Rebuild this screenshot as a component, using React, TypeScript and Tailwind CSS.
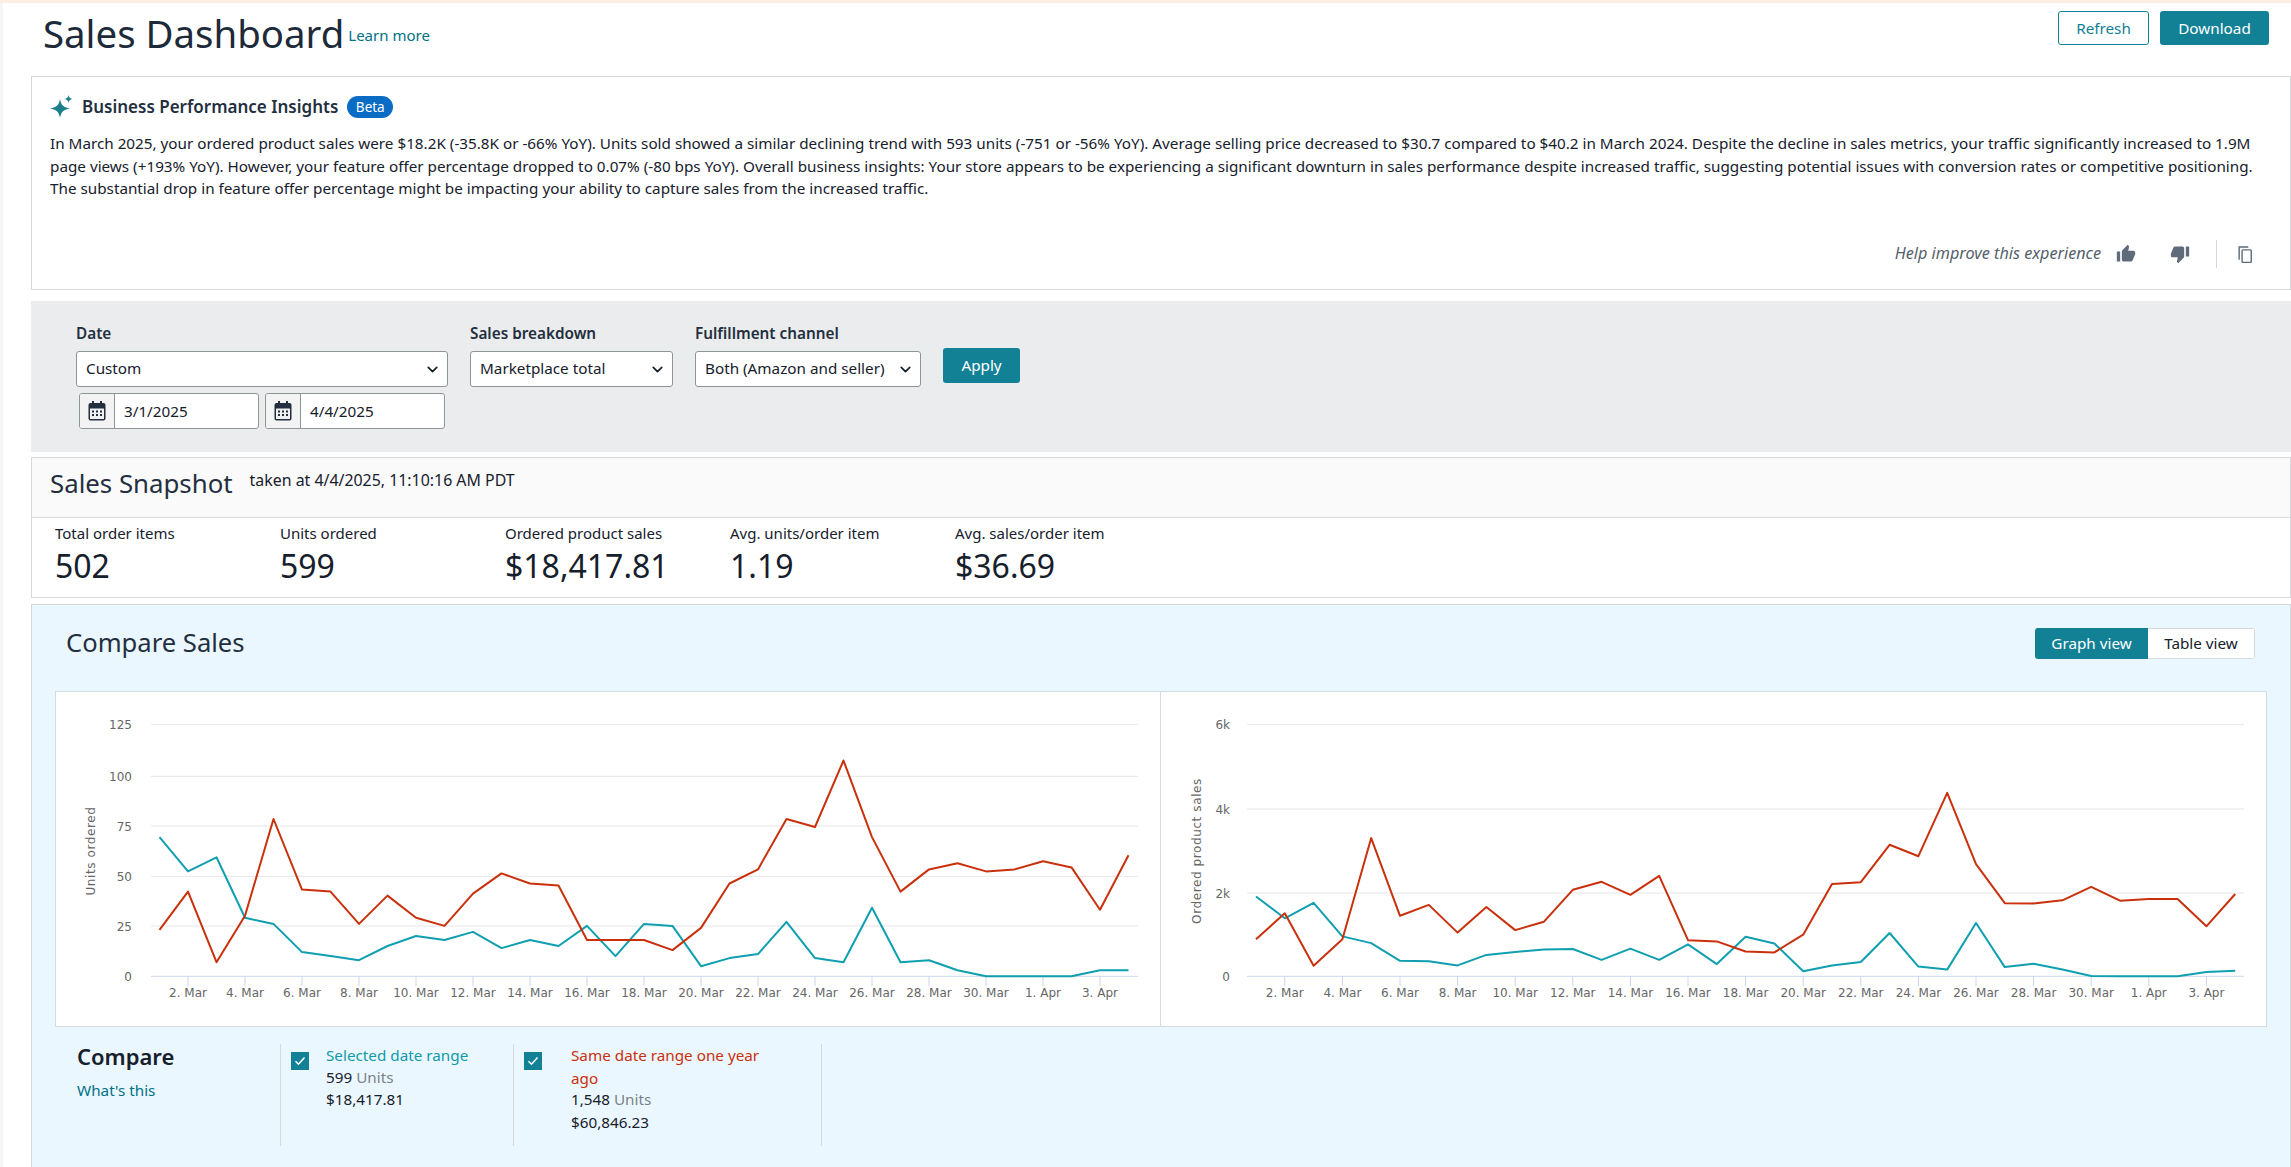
import React from "react";
import { ChevronDown } from "lucide-react";

const unitsRed = [23,42,7,30,78,43,42,26,40,29,25,41,51,46,45,18,18,18,13,24,46,53,78,74,107,69,42,53,56,52,53,57,54,33,60];
const unitsTeal = [69,52,59,29,26,12,10,8,15,20,18,22,14,18,15,25,10,26,25,5,9,11,27,9,7,34,7,8,3,0,0,0,0,3,3];
const salesRed = [880,1500,250,880,3290,1440,1700,1040,1650,1100,1300,2060,2250,1940,2390,860,830,590,570,990,2200,2240,3130,2860,4370,2670,1740,1730,1810,2130,1800,1840,1840,1190,1960];
const salesTeal = [1900,1380,1750,950,790,370,360,260,510,580,640,650,390,660,390,760,290,940,780,120,260,340,1030,230,160,1270,220,300,160,10,0,0,0,100,130];
const ticks = ["2. Mar","4. Mar","6. Mar","8. Mar","10. Mar","12. Mar","14. Mar","16. Mar","18. Mar","20. Mar","22. Mar","24. Mar","26. Mar","28. Mar","30. Mar","1. Apr","3. Apr"];

type ChartProps = {
  viewX: number; width: number; x0: number; step: number; gridL: number; gridR: number;
  labelX: number; titleX: number; title: string; yLabels: [string, number][];
  scale: number; red: number[]; teal: number[];
};

function Chart({ viewX, width, x0, step, gridL, gridR, labelX, titleX, title, yLabels, scale, red, teal }: ChartProps) {
  const base = 975.3;
  const pts = (d: number[]) => d.map((v, i) => `${(x0 + i * step).toFixed(1)},${(base - v * scale).toFixed(1)}`).join(" ");
  return (
    <svg width={width} height={334} viewBox={`${viewX} 691 ${width} 334`} className="block shrink-0">
      {yLabels.map(([t, y]) => (
        <g key={t}>
          <line x1={gridL} x2={gridR} y1={y} y2={y} stroke={t === "0" ? "#ccd6eb" : "#e6e6e6"} strokeWidth={1} />
          <text x={labelX} y={y + 5} textAnchor="end" fontSize={12} fill="#666666" fontFamily="'DejaVu Sans', sans-serif">{t}</text>
        </g>
      ))}
      {ticks.map((t, i) => {
        const x = x0 + (1 + i * 2) * step;
        return (
          <g key={t}>
            <line x1={x} x2={x} y1={975} y2={985} stroke="#ccd6eb" />
            <text x={x} y={996} textAnchor="middle" fontSize={12} fill="#666666" fontFamily="'DejaVu Sans', sans-serif">{t}</text>
          </g>
        );
      })}
      <text transform={`translate(${titleX} 850) rotate(-90)`} textAnchor="middle" fontSize={12} letterSpacing={0.6} fill="#666666" fontFamily="'DejaVu Sans', sans-serif">{title}</text>
      <polyline points={pts(teal)} fill="none" stroke="#0f9fb0" strokeWidth={2} strokeLinejoin="round" />
      <polyline points={pts(red)} fill="none" stroke="#c9300c" strokeWidth={2} strokeLinejoin="round" />
    </svg>
  );
}

function Select({ label, width, value }: { label: string; width: string; value: string }) {
  return (
    <div className={`flex h-[36px] items-center justify-between rounded-[3px] border border-[#8d9596] bg-white pl-[9px] pr-[6px] text-[15.25px] text-[#16202c] ${width}`}>
      <span className="mt-[-2px] whitespace-nowrap">{value}</span>
      <ChevronDown size={17} strokeWidth={2.4} className="shrink-0 text-[#16202c]" aria-label={label} />
    </div>
  );
}

function Cal() {
  return (
    <svg width="18" height="20" viewBox="0 0 18 20" aria-hidden="true">
      <rect x="4" y="0" width="2" height="4" fill="#232f3e" />
      <rect x="12" y="0" width="2" height="4" fill="#232f3e" />
      <rect x="0.5" y="2" width="17" height="17.5" rx="2" fill="#232f3e" />
      <rect x="2" y="7.5" width="14" height="10.5" rx="0.5" fill="#eef0f1" />
      {[4, 8, 12].map((x) => [9.5, 13].map((y) => <rect key={`${x}-${y}`} x={x} y={y} width="2" height="2" fill="#232f3e" />))}
    </svg>
  );
}

function DateInput({ value }: { value: string }) {
  return (
    <div className="flex h-[36px] w-[180px] overflow-hidden rounded-[3px] border border-[#8d9596] bg-white text-[15.25px] text-[#16202c]">
      <div className="flex w-[35px] items-center justify-center border-r border-[#8d9596] bg-[#f3f3f3]"><Cal /></div>
      <div className="flex items-center pl-[9px]">{value}</div>
    </div>
  );
}

function Stat({ label, value }: { label: string; value: string }) {
  return (
    <div className="w-[225px]">
      <div className="text-[15px] leading-[22px] text-[#16202c]">{label}</div>
      <div className="mt-[2px] text-[32px] leading-[40px] text-[#16202c]">{value}</div>
    </div>
  );
}

function Check() {
  return (
    <div className="mt-[8px] flex h-[18px] w-[18px] shrink-0 items-center justify-center bg-[#128196]">
      <svg width="12" height="10" viewBox="0 0 12 10" aria-hidden="true"><path d="M1.5 5.2 4.5 8.2 10.5 1.5" fill="none" stroke="#fff" strokeWidth="1.5" /></svg>
    </div>
  );
}

export default function App() {
  return (
    <div className="h-[1167px] w-[2291px] overflow-hidden bg-white text-[#16202c]" style={{ fontFamily: "'Noto Sans', sans-serif" }}>
      <div className="h-[3px] bg-[#fbeee5]" />
      <div className="flex">
        <div className="h-[1164px] w-[3px] shrink-0 bg-[#f6f6f6]" />
        <main className="min-w-0 flex-1 pl-[28px]">
          <header className="flex h-[73px] items-start justify-between pr-[22px] pt-[8px]">
            <div className="ml-[12px] mt-[-4px] flex items-center gap-[4px]">
              <h1 className="whitespace-nowrap text-[38.4px] font-normal leading-[52px] text-[#1c2a3a]">Sales Dashboard</h1>
              <a className="mt-[4px] text-[15px] text-[#007185]">Learn more</a>
            </div>
            <div className="flex gap-[11px] text-[15.25px]">
              <button className="flex h-[34px] w-[91px] items-center justify-center rounded-[3px] border border-[#128196] bg-white text-[#128196]">Refresh</button>
              <button className="flex h-[34px] w-[109px] items-center justify-center rounded-[3px] bg-[#128196] font-normal text-white">Download</button>
            </div>
          </header>

          <section className="h-[214px] border border-[#d5d9d9] px-[18px] pt-[18px]">
            <div className="flex h-[24px] items-center">
              <svg width="24" height="24" viewBox="0 0 24 24" aria-hidden="true" className="shrink-0">
                <path d="M10 4 C11 10 13 12 20 13.5 C13 15 11 17 10 23 C9 17 7 15 0 13.5 C7 12 9 10 10 4Z" fill="#1b7f8c" />
                <path d="M18.5 0 C19 2.6 20 3.5 22.5 4 C20 4.5 19 5.4 18.5 8 C18 5.4 17 4.5 14.5 4 C17 3.5 18 2.6 18.5 0Z" fill="#1b7f8c" />
              </svg>
              <h2 className="ml-[8px] whitespace-nowrap text-[17px] font-semibold text-[#232f3e]">Business Performance Insights</h2>
              <span className="ml-[9px] flex h-[22px] w-[46px] items-center justify-center rounded-full bg-[#0a6cc4] text-[13.5px] text-white">Beta</span>
            </div>
            <p className="mt-[13px] w-[2222px] text-[15.25px] leading-[22.5px] text-[#16202c]">
              In March 2025, your ordered product sales were $18.2K (-35.8K or -66% YoY). Units sold showed a similar declining trend with 593 units (-751 or -56% YoY). Average selling price decreased to $30.7 compared to $40.2 in March 2024. Despite the decline in sales metrics, your traffic significantly increased to 1.9M page views (+193% YoY). However, your feature offer percentage dropped to 0.07% (-80 bps YoY). Overall business insights: Your store appears to be experiencing a significant downturn in sales performance despite increased traffic, suggesting potential issues with conversion rates or competitive positioning. The substantial drop in feature offer percentage might be impacting your ability to capture sales from the increased traffic.
            </p>
            <div className="mt-[40px] flex h-[28px] items-center justify-end pr-[17px]">
              <span className="mr-[15px] text-[16.2px] italic text-[#565f6b]">Help improve this experience</span>
              <svg width="20" height="20" viewBox="0 0 24 24" fill="#5f6b7a" aria-label="Thumbs up"><path d="M1 21h4V9H1v12zm22-11c0-1.1-.9-2-2-2h-6.31l.95-4.57.03-.32c0-.41-.17-.79-.44-1.06L14.17 1 7.59 7.59C7.22 7.95 7 8.45 7 9v10c0 1.1.9 2 2 2h9c.83 0 1.54-.5 1.84-1.22l3.02-7.05c.09-.23.14-.47.14-.73v-2z" /></svg>
              <svg width="20" height="20" viewBox="0 0 24 24" fill="#5f6b7a" className="ml-[34px]" aria-label="Thumbs down"><path d="M15 3H6c-.83 0-1.54.5-1.84 1.22l-3.02 7.05c-.09.23-.14.47-.14.73v2c0 1.1.9 2 2 2h6.31l-.95 4.57-.03.32c0 .41.17.79.44 1.06L9.83 23l6.59-6.59c.36-.36.58-.86.58-1.41V5c0-1.1-.9-2-2-2zm4 0v12h4V3h-4z" /></svg>
              <div className="ml-[26px] h-[28px] w-px bg-[#d5d9d9]" />
              <svg width="20" height="20" viewBox="0 0 24 24" fill="none" stroke="#5f6b7a" strokeWidth="1.7" className="ml-[18px]" aria-label="Copy"><path d="M5 19V3.5h11" /><rect x="8.5" y="7" width="11" height="15" rx="1" /></svg>
            </div>
          </section>

          <section className="mt-[11px] h-[151px] bg-[#ebeced] pl-[45px] pt-[22px]">
            <div className="flex gap-[22px]">
              <div>
                <div className="mb-[7px] text-[15.3px] font-semibold leading-[21px] text-[#232f3e]">Date</div>
                <Select label="Date" width="w-[372px]" value="Custom" />
                <div className="ml-[3px] mt-[6px] flex gap-[6px]">
                  <DateInput value="3/1/2025" />
                  <DateInput value="4/4/2025" />
                </div>
              </div>
              <div>
                <div className="mb-[7px] text-[15.3px] font-semibold leading-[21px] text-[#232f3e]">Sales breakdown</div>
                <Select label="Sales breakdown" width="w-[203px]" value="Marketplace total" />
              </div>
              <div>
                <div className="mb-[7px] whitespace-nowrap text-[15.3px] font-semibold leading-[21px] text-[#232f3e]">Fulfillment channel</div>
                <Select label="Fulfillment channel" width="w-[226px]" value="Both (Amazon and seller)" />
              </div>
              <button className="mt-[25px] flex h-[35px] w-[77px] items-center justify-center rounded-[3px] bg-[#128196] text-[15.25px] font-normal text-white">Apply</button>
            </div>
          </section>

          <section className="mt-[5px] h-[141px] border border-[#d5d9d9]">
            <div className="flex h-[60px] items-start border-b border-[#d5d9d9] bg-[#fafafa] pl-[18px]">
              <h2 className="mt-[6px] whitespace-nowrap text-[25.8px] font-normal leading-[38px] text-[#232f3e]">Sales Snapshot</h2>
              <span className="ml-[17px] mt-[10px] whitespace-nowrap text-[15.9px] leading-[24px] text-[#16202c]">taken at 4/4/2025, 11:10:16 AM PDT</span>
            </div>
            <div className="flex pl-[23px] pt-[4px]">
              <Stat label="Total order items" value="502" />
              <Stat label="Units ordered" value="599" />
              <Stat label="Ordered product sales" value="$18,417.81" />
              <Stat label="Avg. units/order item" value="1.19" />
              <Stat label="Avg. sales/order item" value="$36.69" />
            </div>
          </section>

          <section className="mt-[6px] h-[565px] border border-[#d5d9d9] bg-[#ebf7ff]">
            <div className="flex h-[86px] items-start justify-between pl-[34px] pr-[35px] pt-[23px]">
              <h2 className="mt-[-3px] whitespace-nowrap text-[25.6px] font-normal leading-[36px] text-[#232f3e]">Compare Sales</h2>
              <div className="flex h-[31px] overflow-hidden rounded-[3px] text-[15.25px]">
                <div className="flex w-[113px] items-center justify-center bg-[#128196] font-normal text-white">Graph view</div>
                <div className="flex w-[107px] items-center justify-center border border-l-0 border-[#d5d9d9] bg-white text-[#16202c]">Table view</div>
              </div>
            </div>
            <div className="ml-[23px] flex h-[336px] w-[2212px] border border-[#d5dbe5] bg-white">
              <Chart viewX={56} width={1104} x0={159.5} step={28.5} gridL={151} gridR={1138} labelX={132} titleX={95} title="Units ordered"
                yLabels={[["125", 723.3], ["100", 775.3], ["75", 825], ["50", 875.3], ["25", 925], ["0", 975.3]]} scale={2.017} red={unitsRed} teal={unitsTeal} />
              <div className="w-px shrink-0 bg-[#d5dbe5]" />
              <Chart viewX={1161} width={1105} x0={1256} step={28.8} gridL={1247} gridR={2244} labelX={1230} titleX={1201} title="Ordered product sales"
                yLabels={[["6k", 723.3], ["4k", 808], ["2k", 892], ["0", 975.3]]} scale={0.042} red={salesRed} teal={salesTeal} />
            </div>
            <div className="ml-[45px] mt-[17px] flex h-[102px]">
              <div className="w-[203px]">
                <div className="mt-[-3px] text-[22px] font-semibold leading-[30px] text-[#16202c]">Compare</div>
                <a className="mt-[8px] block text-[15.25px] leading-[22px] text-[#007185]">What's this</a>
              </div>
              <div className="flex w-[233px] gap-[17px] border-l border-[#d5d9d9] pl-[10px] text-[15.25px] leading-[22.5px]">
                <Check />
                <div>
                  <div className="whitespace-nowrap text-[#0f9aa8]">Selected date range</div>
                  <div className="mt-[-1px]">599 <span className="text-[#7b8288]">Units</span></div>
                  <div>$18,417.81</div>
                </div>
              </div>
              <div className="flex w-[309px] gap-[29px] border-x border-[#d5d9d9] pl-[10px] text-[15.25px] leading-[22.5px]">
                <Check />
                <div className="w-[205px]">
                  <div className="text-[#c9300c]">Same date range one year ago</div>
                  <div className="mt-[-1px]">1,548 <span className="text-[#7b8288]">Units</span></div>
                  <div>$60,846.23</div>
                </div>
              </div>
            </div>
          </section>
        </main>
      </div>
    </div>
  );
}
